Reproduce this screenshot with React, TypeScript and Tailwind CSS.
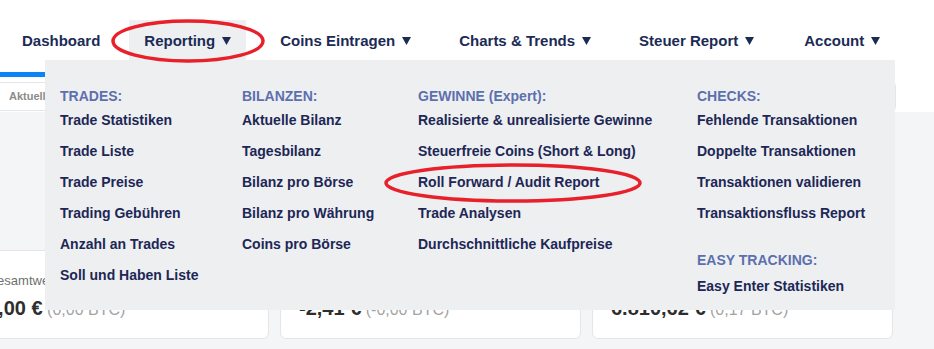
import React from "react";

const navItems = [
  { label: "Dashboard", arrow: false, cls: "ml-[7px]" },
  { label: "Reporting", arrow: true, cls: "ml-[14px] bg-[#eeeff1]" },
  { label: "Coins Eintragen", arrow: true, cls: "ml-[19px]" },
  { label: "Charts & Trends", arrow: true, cls: "ml-[18px]" },
  { label: "Steuer Report", arrow: true, cls: "ml-[18px]" },
  { label: "Account", arrow: true, cls: "ml-[20px]" },
];

const columns = [
  {
    groups: [
      {
        title: "TRADES:",
        items: [
          "Trade Statistiken",
          "Trade Liste",
          "Trade Preise",
          "Trading Gebühren",
          "Anzahl an Trades",
          "Soll und Haben Liste",
        ],
      },
    ],
  },
  {
    groups: [
      {
        title: "BILANZEN:",
        items: [
          "Aktuelle Bilanz",
          "Tagesbilanz",
          "Bilanz pro Börse",
          "Bilanz pro Währung",
          "Coins pro Börse",
        ],
      },
    ],
  },
  {
    groups: [
      {
        title: "GEWINNE (Expert):",
        items: [
          "Realisierte & unrealisierte Gewinne",
          "Steuerfreie Coins (Short & Long)",
          "Roll Forward / Audit Report",
          "Trade Analysen",
          "Durchschnittliche Kaufpreise",
        ],
      },
    ],
  },
  {
    groups: [
      {
        title: "CHECKS:",
        items: [
          "Fehlende Transaktionen",
          "Doppelte Transaktionen",
          "Transaktionen validieren",
          "Transaktionsfluss Report",
        ],
      },
      { title: "EASY TRACKING:", items: ["Easy Enter Statistiken"] },
    ],
  },
];

const cards = [
  { label: "Gesamtwert", value: "0,00 €", btc: "(0,00 BTC)" },
  { label: "Gewinn / Verlust", value: "-2,41 €", btc: "(-0,00 BTC)" },
  { label: "Investiert", value: "6.810,62 €", btc: "(0,17 BTC)" },
];

const Caret = () => (
  <svg width="9" height="8" viewBox="0 0 9 8" className="ml-[7px] shrink-0">
    <path d="M0 0 H9 L4.5 8 Z" fill="#1b2b55" />
  </svg>
);

const StatCard = (props: { label: string; value: string; btc: string }) => {
  const { label, value, btc } = props;
  return (
    <div className="w-[301px] h-[89px] shrink-0 bg-white border border-[#e3e5e8] rounded-[6px] pl-[18px] pt-[21px]">
      <p className="text-[13px] leading-[17px] text-[#6f6f6f] whitespace-nowrap">{label}</p>
      <p className="mt-[6px] leading-[26px] whitespace-nowrap">
        <span className="text-[20px] font-bold text-[#2e2e2e]">{value}</span>{" "}
        <span className="text-[16px] text-[#a3a3a3]">{btc}</span>
      </p>
    </div>
  );
};

export default function App() {
  return (
    <div
      className="relative w-full h-[349px] overflow-hidden bg-[#f4f5f7]"
      style={{ fontFamily: '"Liberation Sans", Arial, sans-serif' }}
    >
      {/* top nav */}
      <nav className="h-[60px] bg-white flex pt-[20px]">
        {navItems.map((item) => (
          <div
            key={item.label}
            className={`h-[40px] px-[15px] pt-[2px] flex items-center text-[15px] font-bold text-[#1b2b55] whitespace-nowrap ${item.cls}`}
          >
            {item.label}
            {item.arrow && <Caret />}
          </div>
        ))}
      </nav>

      {/* progress + tab bar */}
      <div className="h-[52px] bg-white pt-[12px]">
        <div className="h-[5px] w-[420px] bg-[#0a84f6]" />
        <div className="mt-[5px] ml-[-10px] w-[906px] h-[29px] border border-[#e4e6e9] rounded-[4px] flex items-center pl-[18px]">
          <span className="text-[11px] font-bold text-[#8b8b8b]">Aktuelle Bilanz</span>
        </div>
      </div>

      {/* cards */}
      <div className="flex gap-[11px] ml-[-32px] mt-[138px]">
        {cards.map((c) => (
          <StatCard key={c.label} {...c} />
        ))}
      </div>

      {/* dropdown */}
      <div className="absolute left-[45px] top-[60px] w-[850px] h-[250px] bg-[#eeeff1] pl-[15px] pt-[27px] grid grid-cols-[182px_176px_279px_1fr]">
        {columns.map((col, ci) => (
          <div key={ci}>
            {col.groups.map((g, gi) => (
              <div key={g.title} className={gi > 0 ? "mt-[22px]" : ""}>
                <p className="text-[14px] leading-[18px] font-bold text-[#5c6fae] whitespace-nowrap">
                  {g.title}
                </p>
                <ul className={gi > 0 ? "mt-[2px]" : ""}>
                  {g.items.map((it) => (
                    <li
                      key={it}
                      className="h-[31px] leading-[31px] text-[14px] font-bold text-[#1d2756] whitespace-nowrap"
                    >
                      {it}
                    </li>
                  ))}
                </ul>
              </div>
            ))}
          </div>
        ))}
      </div>

      {/* annotation marks */}
      <svg className="absolute inset-0 w-full h-full pointer-events-none" viewBox="0 0 934 349">
        <ellipse cx="188" cy="41" rx="75" ry="20" fill="none" stroke="#e8202a" strokeWidth="3.5" />
        <ellipse cx="513" cy="183" rx="127" ry="18" fill="none" stroke="#e8202a" strokeWidth="3.5" />
      </svg>
    </div>
  );
}
